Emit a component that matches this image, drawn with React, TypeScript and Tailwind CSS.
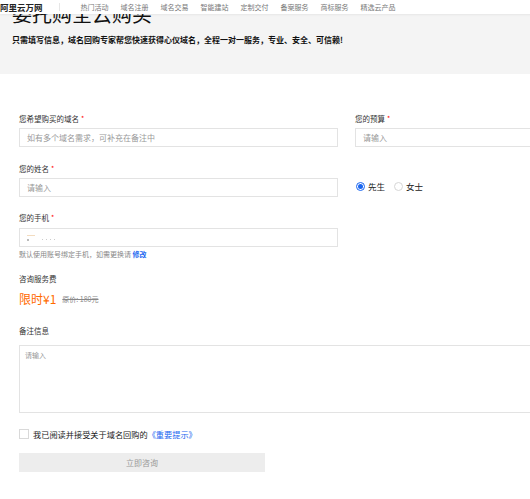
import { useState } from "react";

const navLinks = ["热门活动", "域名注册", "域名交易", "智能建站", "定制交付", "备案服务", "商标服务", "精选云产品"];

function Label({ text, required }: { text: string; required?: boolean }) {
  return (
    <div className="flex items-start h-[10px] text-[7.5px] leading-[10px] text-[#333]">
      {text}
      {required && <span className="ml-[2px] text-[#f00] text-[7px] leading-[8px]">*</span>}
    </div>
  );
}

function TextInput({ placeholder }: { placeholder: string }) {
  return (
    <div className="h-[19px] border border-[#e3e3e3] bg-white flex items-center px-[7px] text-[8px] text-[#999]">
      {placeholder}
    </div>
  );
}

function Radio({ label, checked, onClick }: { label: string; checked: boolean; onClick: () => void }) {
  return (
    <div className="flex items-center gap-[3px] cursor-pointer" onClick={onClick}>
      <span
        className={`w-[9px] h-[9px] rounded-full border flex items-center justify-center ${
          checked ? "border-[#1a66f0]" : "border-[#d6d6d6]"
        }`}
      >
        {checked && <span className="w-[5px] h-[5px] rounded-full bg-[#1a66f0]" />}
      </span>
      <span className="text-[8.5px] text-[#222]">{label}</span>
    </div>
  );
}

export default function App() {
  const [gender, setGender] = useState("male");
  const [agreed, setAgreed] = useState(false);

  return (
    <div
      className="relative w-full h-[499px] overflow-hidden bg-white"
      style={{ fontFamily: '"Noto Sans CJK SC", "Noto Sans", sans-serif' }}
    >
      {/* top nav lies over the banner */}
      <div className="absolute top-0 left-0 w-[640px] h-[14px] bg-white shadow-[0_1px_2px_rgba(0,0,0,0.06)] flex items-center z-10">
        <span className="text-[8.5px] font-bold text-[#222] leading-none">阿里云万网</span>
        <span className="ml-[16px] w-px h-[8px] bg-[#e6e6e6]" />
        <div className="ml-[21px] flex gap-3">
          {navLinks.map((l) => (
            <span key={l} className="text-[7px] text-[#777] leading-none">
              {l}
            </span>
          ))}
        </div>
      </div>

      <div className="w-[640px]">
        {/* banner */}
        <div className="h-[74px] bg-[#f4f4f4] px-[12px] pt-[2px]">
          <div className="text-[20px] leading-[24px] text-[#111]">委托购全云购买</div>
          <div className="mt-[9px] text-[8px] leading-[10px] font-bold text-[#111]">
            只需填写信息，域名回购专家帮您快速获得心仪域名，全程一对一服务，专业、安全、可信赖!
          </div>
        </div>

        {/* form */}
        <div className="pl-[19px] pt-[40px]">
          <div className="flex gap-[17px]">
            <div className="w-[319px] flex flex-col">
              <Label text="您希望购买的域名" required />
              <div className="mt-[4px]">
                <TextInput placeholder="如有多个域名需求，可补充在备注中" />
              </div>
            </div>
            <div className="w-[240px] flex flex-col">
              <Label text="您的预算" required />
              <div className="mt-[4px]">
                <TextInput placeholder="请输入" />
              </div>
            </div>
          </div>

          <div className="mt-[17px] flex gap-[17px]">
            <div className="w-[319px] flex flex-col">
              <Label text="您的姓名" required />
              <div className="mt-[4px]">
                <TextInput placeholder="请输入" />
              </div>
            </div>
            <div className="flex items-end pb-[4px] pl-[1px] gap-[9px]">
              <Radio label="先生" checked={gender === "male"} onClick={() => setGender("male")} />
              <Radio label="女士" checked={gender === "female"} onClick={() => setGender("female")} />
            </div>
          </div>

          <div className="mt-[16px] w-[319px] flex flex-col">
            <Label text="您的手机" required />
            <div className="mt-[5px] h-[19px] border border-[#e3e3e3] bg-white px-[7px] flex flex-col justify-center gap-[3px]">
              <span className="w-[8px] h-px bg-[#f3dcc0]" />
              <div className="flex items-center gap-[3px]">
                <span className="w-[2px] h-[2px] bg-[#bbb]" />
                <span className="ml-[10px] w-[1px] h-[1px] bg-[#ccc]" />
                <span className="w-[1px] h-[1px] bg-[#ccc]" />
                <span className="w-[1px] h-[1px] bg-[#ccc]" />
                <span className="w-[1px] h-[1px] bg-[#ccc]" />
              </div>
            </div>
            <div className="mt-[2px] text-[7px] leading-[10px] text-[#888]">
              默认使用账号绑定手机，如需更换请 <span className="text-[#1a66f0] font-bold">修改</span>
            </div>
          </div>

          <div className="mt-[15px]">
            <Label text="咨询服务费" />
            <div className="mt-[8px] flex items-center">
              <span className="text-[12px] leading-[14px] text-[#ff6a00]">限时¥1</span>
              <span className="ml-[6px] text-[7px] text-[#888] line-through">原价: 180元</span>
            </div>
          </div>

          <div className="mt-[20px]">
            <Label text="备注信息" />
            <div className="mt-[9px] w-[600px] h-[68px] border border-[#e3e3e3] px-[5px] pt-[4px] text-[7px] text-[#999]">
              请输入
            </div>
          </div>

          <div className="mt-[16px] flex items-center gap-[4px]">
            <span
              className={`w-[10px] h-[10px] border cursor-pointer ${
                agreed ? "border-[#1a66f0] bg-[#1a66f0]" : "border-[#d9d9d9] bg-white"
              }`}
              onClick={() => setAgreed(!agreed)}
            />
            <span className="text-[8.2px] leading-[10px] text-[#222]">
              我已阅读并接受关于域名回购的<span className="text-[#1a66f0]">《重要提示》</span>
            </span>
          </div>

          <button className="mt-[14px] w-[246px] h-[19px] bg-[#ededed] text-[8px] text-[#999] flex items-center justify-center">
            立即咨询
          </button>
        </div>
      </div>
    </div>
  );
}
